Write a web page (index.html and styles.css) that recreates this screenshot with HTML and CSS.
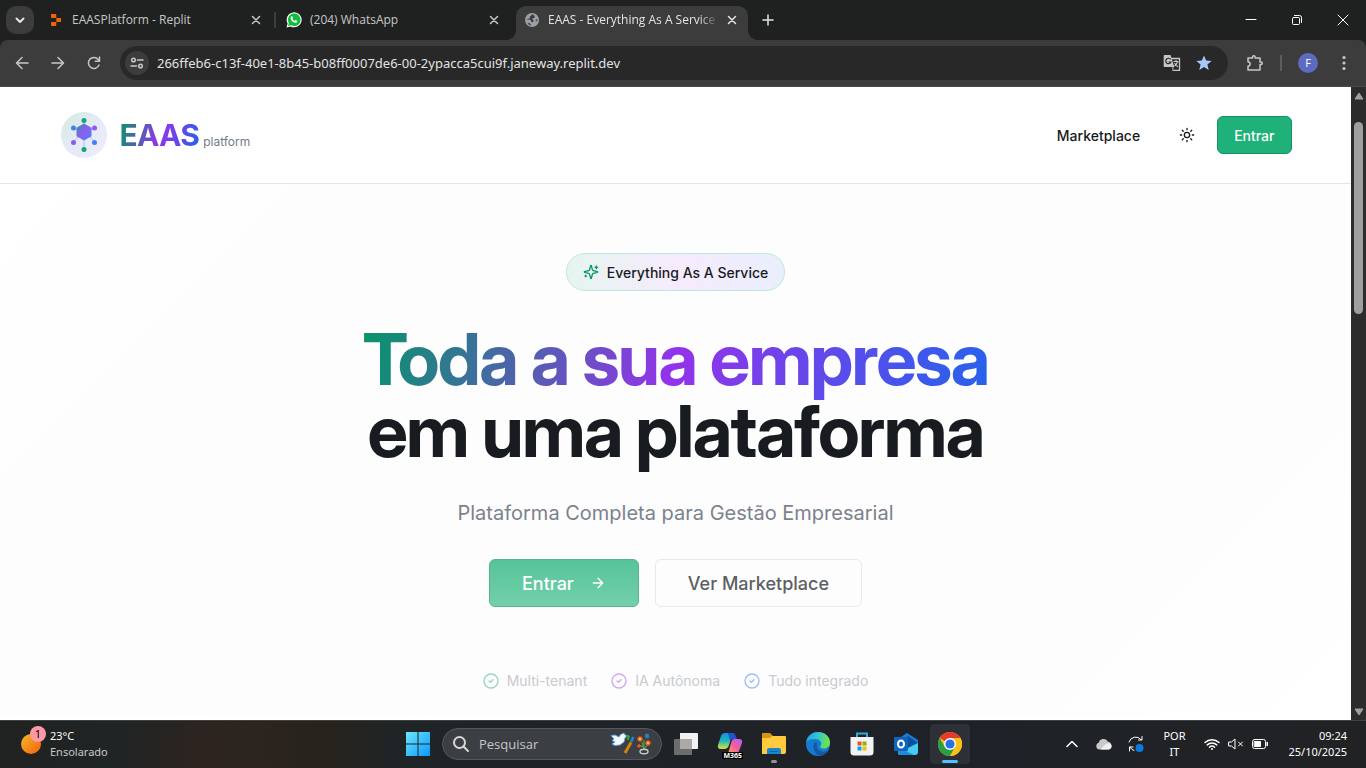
FILE: index.html
```html
<!DOCTYPE html>
<html lang="pt-BR">
<head>
<meta charset="utf-8">
<title>EAAS - Everything As A Service</title>
<meta name="viewport" content="width=device-width, initial-scale=1">
<link rel="stylesheet" href="styles.css">
</head>
<body>
<div class="tabstrip">
  <button class="tab-search" aria-label="Pesquisar guias"><svg width="12" height="12" viewBox="0 0 12 12" class="line w2"><path d="M2.5 4.5 6 8l3.5-3.5"/></svg></button>
  <div class="tabs">
    <div class="tab">
      <svg width="16" height="16" viewBox="0 0 16 16" fill="#f26207"><path d="M3 2h4.500q.8 0 .8.8V6H3.800Q3 6 3 5.200zM8.300 6h4q.8 0 .8.8v2.400q0 .8-.8.8h-4zM3 10.800q0-.8.8-.8h4.500v3.200q0 .8-.8.8H3.800Q3 14 3 13.200z"/></svg>
      <span class="tab-title">EAASPlatform - Replit</span>
      <button class="tab-close" aria-label="Fechar guia"><svg width="10" height="10" viewBox="0 0 10 10" class="line w15"><path d="m1.500 1.500 7 7m0-7-7 7"/></svg></button>
    </div>
    <div class="tab divided">
      <svg width="16" height="16" viewBox="0 0 16 16"><path fill="#fff" d="M.5 15.500 1.600 11.500A7.500 7.500 0 1 1 4.500 14.400z"/><path fill="#12bd3d" d="m2 14 .8-3A6.300 6.300 0 1 1 5 13.200z"/><path fill="#fff" d="M5.200 4.500c.4-.5 1-.5 1.200 0l.5 1.200c.1.300-.5.800-.5 1 .5 1 1.200 1.700 2.300 2.200.3 0 .7-.8 1-.8l1.400.7c.4.300 0 1.300-.5 1.700-1 .7-2.600.200-4-.9C5 8.200 4 6 5.200 4.500z"/></svg>
      <span class="tab-title">(204) WhatsApp</span>
      <button class="tab-close" aria-label="Fechar guia"><svg width="10" height="10" viewBox="0 0 10 10" class="line w15"><path d="m1.500 1.500 7 7m0-7-7 7"/></svg></button>
    </div>
    <div class="tab active">
      <svg width="16" height="16" viewBox="0 0 16 16"><circle cx="8" cy="8" r="7" fill="#9aa0a6"/><path fill="#3c3c3c" d="M9 2.500c-2 0-1.700 1.500-3 1.800-.5.700.300 1.200-.2 1.900-.7.800-2.600.3-3.300 1.300 1.600.500 3.200-.1 4.200.7.800.7.200 1.700 1.300 2 .8.300 1.500-.5 1.500-1.400 0-1-.8-1.400-1.500-2 .8-.8 2.300-.3 2.700-1.500.2-.7-.3-1-.3-1.500zM3.500 11c1 .2 2 0 2.800.7.500.6.400 1.300.8 2-1.500-.3-2.800-1.200-3.600-2.700zM12.800 7c-.9.500-1.300 1.400-1.100 2.600.700-.200 1.200-.8 1.600-.8q.1-1-.5-1.800z"/></svg>
      <span class="tab-title fade">EAAS - Everything As A Service |</span>
      <button class="tab-close" aria-label="Fechar guia"><svg width="10" height="10" viewBox="0 0 10 10" class="line w15"><path d="m1.500 1.500 7 7m0-7-7 7"/></svg></button>
    </div>
    <button class="new-tab" aria-label="Nova guia"><svg width="12" height="12" viewBox="0 0 12 12" class="line w15"><path d="M6 1v10M1 6h10"/></svg></button>
  </div>
  <div class="window-controls">
    <button aria-label="Minimizar"><svg width="12" height="12" viewBox="0 0 12 12" class="line w1"><path d="M1 5.500h10"/></svg></button>
    <button aria-label="Restaurar"><svg width="12" height="12" viewBox="0 0 12 12" class="line w1"><rect x="1.500" y="3.500" width="7" height="7" rx="1"/><path d="M3.500 1.500h5a2 2 0 0 1 2 2v5"/></svg></button>
    <button aria-label="Fechar"><svg width="12" height="12" viewBox="0 0 12 12" class="line w1"><path d="m1 1 10 10m0-10L1 11"/></svg></button>
  </div>
</div>

<div class="toolbar">
  <button class="tool" aria-label="Voltar"><svg width="16" height="16" viewBox="0 0 16 16" class="line w15"><path d="M14 8H2.500M8 2.500 2.500 8 8 13.500"/></svg></button>
  <button class="tool" aria-label="Avançar"><svg width="16" height="16" viewBox="0 0 16 16" class="line w15"><path d="M2 8h11.500M8 2.500 13.500 8 8 13.500"/></svg></button>
  <button class="tool" aria-label="Recarregar"><svg width="16" height="16" viewBox="0 0 16 16" class="line w15"><path d="M13 10a5.500 5.500 0 1 1-.8-5.500L13.500 6M13.500 2v4.200H9.300"/></svg></button>
  <div class="omnibox">
    <button class="site-info" aria-label="Informações do site"><svg width="14" height="14" viewBox="0 0 14 14" class="line w15"><circle cx="3.500" cy="4" r="1.800"/><path d="M7.500 4H13M1 10h5.500"/><circle cx="10.500" cy="10" r="1.800"/></svg></button>
    <input class="url" type="text" aria-label="Endereço" value="266ffeb6-c13f-40e1-8b45-b08ff0007de6-00-2ypacca5cui9f.janeway.replit.dev">
    <button class="omni-action" aria-label="Traduzir"><svg width="18" height="18" viewBox="0 0 18 18"><path d="M7 4.500h9.500v11.800H9.500" fill="none" stroke="#c7c7c7" stroke-width="1.300"/><path d="M1.500 1h6l3.800 12h-9.800q-.8 0-.8-.8V1.800q0-.8.8-.8z" fill="#c7c7c7"/><path d="M7.800 5.500A2.700 2.700 0 1 0 8 8H5.600" fill="none" stroke="#282828" stroke-width="1.200"/><path d="M10.500 7.500h5M13 6v1.500m1.500 0c-.5 2-1.500 3.500-3 4.500m0-3c.8 1.800 2 3 3.500 3.700" fill="none" stroke="#c7c7c7" stroke-width="1.100"/><path d="m9 13.500 2 0-1.500 2.500z" fill="#c7c7c7"/></svg></button>
    <button class="omni-action" aria-label="Favorito"><svg width="16" height="16" viewBox="0 0 16 16"><path fill="#a8c7fa" d="m8 .5 2.100 5.100 5.500.4-4.200 3.600 1.300 5.400L8 12.100 3.300 15l1.300-5.400L.4 6l5.500-.4z"/></svg></button>
  </div>
  <button class="tool ext" aria-label="Extensões"><svg width="18" height="18" viewBox="0 0 18 18" class="line w15"><path d="M2 4h4.500V3a1.300 1.300 0 0 1 2.600 0v1H14v4h1a1.300 1.300 0 0 1 0 2.600h-1V16H2v-3.700c2.800-.4 2.800-4.200 0-4.600z"/></svg></button>
  <span class="tool-sep"></span>
  <button class="profile" aria-label="Perfil">F</button>
  <button class="tool more" aria-label="Menu"><svg width="16" height="16" viewBox="0 0 16 16" fill="#c7c7c7"><circle cx="8" cy="2.500" r="1.600"/><circle cx="8" cy="8" r="1.600"/><circle cx="8" cy="13.500" r="1.600"/></svg></button>
</div>

<div class="viewport">
  <div class="page">
    <header class="site-header">
      <div class="container">
        <a class="brand" href="#">
          <svg width="48" height="48" viewBox="0 0 48 48">
            <defs>
              <linearGradient id="disc" x1="0" y1="0" x2="1" y2="1"><stop offset="0" stop-color="#d3ece3"/><stop offset=".5" stop-color="#e5eaf5"/><stop offset="1" stop-color="#efecfe"/></linearGradient>
              <linearGradient id="hex" x1="0" y1="0" x2="1" y2="1"><stop offset="0" stop-color="#358f9c"/><stop offset=".5" stop-color="#8a5ff2"/><stop offset="1" stop-color="#4a82f6"/></linearGradient>
            </defs>
            <circle cx="24" cy="24" r="23" fill="url(#disc)"/>
            <path d="M24 12v26M13.500 17 24 21l10.500-4M20 23l-6.500 8.500M28 23l6.500 8.500" fill="none" stroke="#b4bfeb" stroke-width="1"/>
            <path d="m24 12.500 7.500 4.200v8.600l-7.500 4.200-7.500-4.200v-8.600z" fill="url(#hex)"/>
            <g fill="#0fa67c"><circle cx="24" cy="9.500" r="2.500"/><circle cx="24" cy="38.500" r="2.500"/></g>
            <g fill="#3b82f6"><circle cx="13.500" cy="17" r="2.500"/><circle cx="34.500" cy="31.500" r="2.500"/></g>
            <g fill="#8b5cf6"><circle cx="34.500" cy="17" r="2.500"/><circle cx="13.500" cy="31.500" r="2.500"/></g>
          </svg>
          <span class="brand-text"><span class="brand-name">EAAS</span><span class="brand-sub">platform</span></span>
        </a>
        <nav class="site-nav">
          <a class="nav-link" href="#">Marketplace</a>
          <button class="theme" aria-label="Alternar tema"><svg width="16" height="16" viewBox="0 0 24 24" class="line w2"><circle cx="12" cy="12" r="4"/><path d="M12 2v2M12 20v2M4.930 4.930l1.410 1.410M17.660 17.660l1.410 1.410M2 12h2M20 12h2M6.340 17.660l-1.410 1.410M19.070 4.930l-1.410 1.410"/></svg></button>
          <button class="btn-primary">Entrar</button>
        </nav>
      </div>
    </header>
    <main class="hero">
      <div class="badge"><svg width="16" height="16" viewBox="0 0 24 24" class="line w2"><path d="M9.937 15.500A2 2 0 0 0 8.500 14.063l-6.135-1.582a.5.5 0 0 1 0-.962L8.500 9.936A2 2 0 0 0 9.937 8.500l1.582-6.135a.5.5 0 0 1 .963 0L14.063 8.500A2 2 0 0 0 15.500 9.937l6.135 1.581a.5.5 0 0 1 0 .964L15.500 14.063a2 2 0 0 0-1.437 1.437l-1.582 6.135a.5.5 0 0 1-.963 0zM20 3v4M22 5h-4M4 17v2M5 18H3"/></svg><span>Everything As A Service</span></div>
      <h1 class="title"><span class="title-gradient">Toda a sua empresa</span><br>em uma plataforma</h1>
      <p class="subtitle">Plataforma Completa para Gestão Empresarial</p>
      <div class="actions">
        <button class="cta cta-primary">Entrar<svg width="16" height="16" viewBox="0 0 24 24" class="line w2"><path d="M5 12h14M12 5l7 7-7 7"/></svg></button>
        <button class="cta cta-outline">Ver Marketplace</button>
      </div>
      <ul class="features">
        <li class="green"><svg width="16" height="16" viewBox="0 0 24 24" class="line w2"><circle cx="12" cy="12" r="10.500"/><path d="m9 12 2 2 4-4"/></svg>Multi-tenant</li>
        <li class="purple"><svg width="16" height="16" viewBox="0 0 24 24" class="line w2"><circle cx="12" cy="12" r="10.500"/><path d="m9 12 2 2 4-4"/></svg>IA Autônoma</li>
        <li class="blue"><svg width="16" height="16" viewBox="0 0 24 24" class="line w2"><circle cx="12" cy="12" r="10.500"/><path d="m9 12 2 2 4-4"/></svg>Tudo integrado</li>
      </ul>
    </main>
  </div>
  <div class="scrollbar">
    <svg width="10" height="8" viewBox="0 0 10 8"><path fill="#9f9f9f" stroke="#9f9f9f" stroke-linejoin="round" d="m5 1 4 6H1z"/></svg>
    <div class="track"><div class="thumb"></div></div>
    <svg width="10" height="8" viewBox="0 0 10 8"><path fill="#9f9f9f" stroke="#9f9f9f" stroke-linejoin="round" d="M5 7 1 1h8z"/></svg>
  </div>
</div>

<footer class="taskbar">
  <button class="weather">
    <span class="weather-icon"><svg width="20" height="20" viewBox="0 0 20 20"><defs><linearGradient id="sun" x1="0" y1="0" x2="1" y2="1"><stop offset="0" stop-color="#f5b92c"/><stop offset="1" stop-color="#f2600c"/></linearGradient></defs><circle cx="10" cy="10" r="10" fill="url(#sun)"/></svg><span class="count">1</span></span>
    <span class="weather-text"><span>23°C</span><span class="dim">Ensolarado</span></span>
  </button>
  <div class="apps">
    <button class="app" aria-label="Iniciar"><svg width="24" height="24" viewBox="0 0 24 24"><defs><linearGradient id="win" gradientUnits="userSpaceOnUse" x1="0" y1="0" x2="24" y2="24"><stop offset="0" stop-color="#6fe6ff"/><stop offset="1" stop-color="#0a98fa"/></linearGradient></defs><path fill="url(#win)" d="M0 0h11.500v11.500H0zM12.500 0H24v11.500H12.500zM0 12.500h11.500V24H0zM12.500 12.500H24V24H12.500z"/></svg></button>
    <label class="search">
      <svg width="16" height="16" viewBox="0 0 16 16" class="line w2"><circle cx="6.500" cy="6.500" r="5.500"/><path d="m10.500 10.500 4.500 4.500"/></svg>
      <input type="text" placeholder="Pesquisar" aria-label="Pesquisar">
      <svg width="42" height="24" viewBox="0 0 42 24"><path d="M1 3.500 5 3l4 2 1.500-2.500L14 1l1 2 2 .5-2 2.500-1 4-4 3-5 .500-3-1.500L5 10 2 8.500 4 7z" fill="#f3faff" stroke="#4da3e6" stroke-width=".9"/><path d="m16 4.500 4 .5M18 3v5" stroke="#3c9a42" stroke-width="2"/><path d="m15 21 6-10.500" stroke="#c8860d" stroke-width="3"/><path d="m21 10 2.500-5" stroke="#2385d0" stroke-width="2.500"/><path d="m34 17-2-7M34 17l4-5M34 17V8M33 15l-4-2" stroke="#4f9b45" stroke-width="1.200"/><g stroke="#e0602c" stroke-width="1.300"><path d="M30 4v6M27 7h6M28 5l4 4M32 5l-4 4M38 8v6M35 11h6M36 9l4 4M40 9l-4 4M29 12v4M27 14h4"/></g><path d="M34.500 4h5M37 1.500v5M35.200 2.200l3.600 3.600M38.800 2.200l-3.600 3.600" stroke="#2f80bd" stroke-width="1.200"/><circle cx="30" cy="7" r="1.200" fill="#ffc83d"/><circle cx="38" cy="11" r="1.200" fill="#ffc83d"/><ellipse cx="34" cy="19.500" rx="4" ry="2.300" fill="none" stroke="#ccc" stroke-width="1.400"/></svg>
    </label>
    <button class="app" aria-label="Visão de tarefas"><svg width="24" height="24" viewBox="0 0 24 24"><path fill="#f2f2f2" d="M6 1h17a1 1 0 0 1 1 1v14a1 1 0 0 1-1 1H6z"/><path fill="#6d6d6d" d="M1 7h17v16H1a1 1 0 0 1-1-1V8a1 1 0 0 1 1-1z"/><path fill="#aaa" d="M6 7h12v10H6z"/></svg></button>
    <button class="app" aria-label="Copilot"><svg width="26" height="24" viewBox="0 0 26 24"><defs><linearGradient id="co1" x1="0" y1="0" x2="0" y2="1"><stop offset="0" stop-color="#168fe8"/><stop offset=".5" stop-color="#21b9b7"/><stop offset="1" stop-color="#e5df3a"/></linearGradient><linearGradient id="co2" x1="1" y1="0" x2="0" y2="1"><stop offset="0" stop-color="#b65cff"/><stop offset=".5" stop-color="#f05d9c"/><stop offset="1" stop-color="#ffa551"/></linearGradient></defs><path fill="url(#co1)" d="M8 1h8l-4 12q-1 4-5 4H4q-4 0-3-4l3-9q1-3 4-3z"/><path fill="#1b56cf" d="M11 1h5q2 0 3 4l1 2h-5l-2 2z"/><path fill="url(#co2)" d="M17 7h5q4 0 3 4l-3 8q-1 3-4 3h-7l3-11q1-4 3-4z"/></svg><span class="m365">M365</span></button>
    <button class="app running" aria-label="Explorador de Arquivos"><svg width="24" height="24" viewBox="0 0 24 24"><path fill="#d99512" d="M0 2q0-1 1-1h7l3 3v4H0z"/><path fill="#ffca3e" d="M0 6h8l2-2h13q1 0 1 1v15q0 2-2 2H0z"/><path fill="#1788cf" d="M5 18q0-2 2-2h10q2 0 2 2v4H5z"/><path fill="#0d5e9d" d="M8 19h8v1H8z"/></svg></button>
    <button class="app" aria-label="Edge"><svg width="24" height="24" viewBox="0 0 24 24"><defs><linearGradient id="ed1" x1="0" y1="0" x2="1" y2=".2"><stop offset="0" stop-color="#259be0"/><stop offset=".5" stop-color="#31c5d4"/><stop offset="1" stop-color="#6ee150"/></linearGradient></defs><circle cx="12" cy="12" r="12" fill="#157bd0"/><path fill="url(#ed1)" d="M.2 10C1.500 3 7 0 12 0c8 0 12 5.500 12 10.500 0 4-3 6-6.500 6-3 0-4-1.500-3-2.500 1.500-1.800 1-6-4-7C6 6.500 2 7.500.2 10z"/><path fill="#1556a5" d="M8 11c-2 6 1.500 13 7.500 12.500 3-.8 5.500-2.800 7-5-7 3-13 0-11.500-7.500-1-1-2.500-1-3 0z"/></svg></button>
    <button class="app" aria-label="Microsoft Store"><svg width="24" height="24" viewBox="0 0 24 24"><path d="M7 6V1.500h10V6" fill="none" stroke="#33a9e0" stroke-width="2"/><path d="M.5 5h23v15q0 3.500-3.500 3.500H4Q.5 23.500.5 20z" fill="#f3f3f3"/><path fill="#f05022" d="M7.500 9.500h4v4h-4z"/><path fill="#7fba00" d="M12.500 9.500h4v4h-4z"/><path fill="#00a4ef" d="M7.500 14.500h4v4h-4z"/><path fill="#ffb900" d="M12.500 14.500h4v4h-4z"/></svg></button>
    <button class="app" aria-label="Outlook"><svg width="24" height="24" viewBox="0 0 24 24"><path fill="#1680d8" d="m4 7 9-6 11 7v4L14 18 4 12z"/><path fill="#0c4f9d" d="m8 8 6-4 10 7-10 5z"/><path fill="#46cbf2" d="M24 11v9q0 3-3 3H7q-3 0-3-2z"/><path fill="#1c8ee0" d="m4 15 16 8H7q-3 0-3-3z"/><rect y="5" width="14" height="14" rx="1" fill="#0f64be"/><ellipse cx="7" cy="12" rx="3" ry="3.500" fill="none" stroke="#fff" stroke-width="2"/></svg></button>
    <button class="app current" aria-label="Chrome"><svg width="24" height="24" viewBox="0 0 24 24"><circle cx="12" cy="12" r="12" fill="#fbc116"/><path fill="#e33b2e" d="M12 12 1.600 6A12 12 0 0 1 22.400 6z"/><path fill="#269f47" d="M1.600 6A12 12 0 0 0 12 24l5.200-9L12 12l-5.200 3z"/><path fill="#fbc116" d="M12 6h10.400A12 12 0 0 1 12 24l5.200-9z"/><circle cx="12" cy="12" r="6" fill="#fff"/><circle cx="12" cy="12" r="4.600" fill="#2870e8"/></svg></button>
  </div>
  <div class="tray">
    <button class="tray-icon" aria-label="Ícones ocultos"><svg width="12" height="12" viewBox="0 0 12 12" class="line w15"><path d="m1 8.500 5-5 5 5"/></svg></button>
    <button class="tray-icon" aria-label="OneDrive"><svg width="16" height="12" viewBox="0 0 16 12"><path fill="#c9c9c9" d="M3.500 11.500a3.500 3.500 0 0 1-.8-6.800A5 5 0 0 1 11.800 3.500a4.200 4.200 0 0 1 .7 8z"/><path fill="#f0f0f0" d="M5 11.500q2-5 8-6.500 3 1 2.700 3.500-.5 3-3.200 3z"/></svg></button>
    <button class="tray-icon" aria-label="Atualização"><svg width="18" height="18" viewBox="0 0 18 18" class="line w1"><path d="M2 7a7 7 0 0 1 12-2.500M15 1.500V5h-3.500M7 15.500a6 6 0 0 1-4-3.500M2.500 16v-4H6"/><circle cx="12.500" cy="13" r="4" fill="#0a7be0" stroke="none"/></svg></button>
    <button class="lang"><span>POR</span><span>IT</span></button>
    <button class="status" aria-label="Rede, som e bateria">
      <svg width="16" height="14" viewBox="0 0 16 14" class="line w15"><path d="M1 5.500a10 10 0 0 1 14 0M3.300 7.900a6.700 6.700 0 0 1 9.400 0M5.500 10.200a3.600 3.600 0 0 1 5 0"/><circle cx="8" cy="12" r="1" fill="currentColor" stroke="none"/></svg>
      <svg width="16" height="14" viewBox="0 0 16 14" class="line w1"><path d="M1 5h2.500L7 2v10L3.500 9H1zM10.500 5l4 4m0-4-4 4"/></svg>
      <svg width="16" height="14" viewBox="0 0 16 14" class="line w1"><rect x=".5" y="2.500" width="13" height="9" rx="2"/><path d="M2.500 4.500h6v5h-6z" fill="currentColor"/><path d="M15.200 5.500v3" stroke-width="1.500"/></svg>
    </button>
    <button class="clock"><span>09:24</span><span>25/10/2025</span></button>
  </div>
</footer>
</body>
</html>
```
FILE: styles.css
```css
* { box-sizing: border-box; }
body {
  margin: 0;
  height: 100vh;
  display: flex;
  flex-direction: column;
  overflow: hidden;
  font-family: "Open Sans", "Noto Sans", sans-serif;
  font-size: 12px;
  color: #e3e3e3;
  background: #1f2020;
}
button, input { font: inherit; color: inherit; background: none; border: 0; padding: 0; margin: 0; }
a { color: inherit; text-decoration: none; }
svg { flex: none; display: block; }
.line { fill: none; stroke: currentColor; stroke-linecap: round; stroke-linejoin: round; }
.w1 { stroke-width: 1; }
.w15 { stroke-width: 1.5; }
.w2 { stroke-width: 2; }

/* Tab strip */
.tabstrip { display: flex; height: 40px; padding-left: 6px; background: #1f2120; }
.tab-search { display: grid; place-items: center; width: 28px; height: 28px; margin: 6px 6px 0 0; border-radius: 10px; background: #3c3c3c; }
.tabs { display: flex; flex: 1; gap: 6px; min-width: 0; }
.tab { position: relative; display: flex; align-items: center; gap: 8px; flex: 0 1 232px; min-width: 0; margin-top: 6px; padding: 0 11px 6px 8px; color: #c7c7c7; }
.tab-title { flex: 1; min-width: 0; overflow: hidden; white-space: nowrap; font-size: 12px; line-height: 16px; }
.tab-close { display: grid; place-items: center; }
.divided::before { content: ""; position: absolute; left: -4px; top: 6px; width: 2px; height: 16px; background: #3c3c3c; }
.active { background: #3c3c3c; border-radius: 10px 10px 0 0; color: #e3e3e3; }
.active::before, .active::after { content: ""; position: absolute; bottom: 0; width: 10px; height: 10px; }
.active::before { left: -10px; background: radial-gradient(circle at 0 0, transparent 10px, #3c3c3c 10px); }
.active::after { right: -10px; background: radial-gradient(circle at 100% 0, transparent 10px, #3c3c3c 10px); }
.fade { -webkit-mask-image: linear-gradient(90deg, #000 88%, transparent); mask-image: linear-gradient(90deg, #000 88%, transparent); }
.new-tab { display: grid; place-items: center; width: 28px; height: 40px; }
.window-controls { display: flex; color: #fff; }
.window-controls button { display: grid; place-items: center; width: 46px; }

/* Toolbar */
.toolbar { display: flex; align-items: center; height: 47px; padding: 0 8px 0 4px; background: #3c3c3c; border-bottom: 1px solid #4a4a4a; border-radius: 8px 8px 0 0; color: #c7c7c7; }
.tool { display: grid; place-items: center; width: 36px; height: 34px; }
.omnibox { display: flex; align-items: center; flex: 1; height: 34px; margin-left: 8px; padding: 0 8px 0 5px; border-radius: 17px; background: #282828; }
.site-info { display: grid; place-items: center; width: 24px; height: 24px; margin-right: 8px; border-radius: 50%; background: #3c3c3c; }
.url { flex: 1; min-width: 0; font-family: "Noto Sans", sans-serif; font-size: 13px; color: #e3e3e3; outline: 0; }
.omni-action { display: grid; place-items: center; width: 32px; height: 32px; }
.ext { margin-left: 9px; }
.tool-sep { width: 2px; height: 16px; margin: 0 16px 0 7px; background: #5c5c5c; }
.profile { width: 20px; height: 20px; border-radius: 50%; background: #5c6bc0; color: #fff; font-size: 11px; line-height: 20px; }
.more { width: 28px; margin-left: 12px; }

/* Page */
.viewport { display: flex; flex: 1; min-height: 0; font-family: Inter, sans-serif; color: #181b20; }
.page { flex: 1; min-width: 0; overflow: hidden; background: #fff; }
.site-header { border-bottom: 1px solid #e5e5e5; }
.container { display: flex; align-items: center; justify-content: space-between; max-width: 1280px; margin: 0 auto; padding: 24px; }
.brand { display: flex; align-items: center; gap: 12px; }
.brand-text { display: flex; align-items: baseline; gap: 4px; }
.brand-name { font-size: 30px; font-weight: 700; line-height: 36px; letter-spacing: -0.025em; }
.brand-name, .title-gradient { background: linear-gradient(105deg, #059669, #9333ea 50%, #2563eb); -webkit-background-clip: text; background-clip: text; color: transparent; }
.brand-sub { font-size: 12px; line-height: 16px; color: #747b88; }
.site-nav { display: flex; align-items: center; font-size: 14px; font-weight: 500; }
.theme { display: grid; place-items: center; width: 38px; height: 38px; margin: 0 11px 0 28px; }
.btn-primary { height: 38px; padding: 0 16px; border: 1px solid #189161; border-radius: 6px; background: #1eb179; color: #fff; }
.hero { display: flex; flex-direction: column; align-items: center; padding: 69px 24px 24px; background: linear-gradient(135deg, #fff, #fdfdfd 20%, #fdfdfd 80%, #fff); }
.badge { display: flex; align-items: center; gap: 8px; height: 38px; padding: 0 16px; border: 1px solid #bce8df; border-radius: 19px; background: linear-gradient(to right, #e6f5f0, #f6ebfd 50%, #e9effd); font-size: 14px; font-weight: 500; }
.badge svg { color: #059669; }
.title { margin: 32px 0; font-family: "Inter Display", Inter, sans-serif; font-size: 72px; font-weight: 700; line-height: 72px; letter-spacing: -0.025em; text-align: center; }
.subtitle { margin: 0; font-size: 20px; line-height: 28px; color: #7c828d; }
.actions { display: flex; gap: 16px; margin-top: 32px; }
.cta { display: flex; align-items: center; gap: 16px; height: 48px; padding: 0 32px; border: 1px solid #e9e9ea; border-radius: 6px; font-size: 18px; font-weight: 500; }
.cta-primary { border-color: #58b48f; background: linear-gradient(#56c499, #73cfaa); color: #fff; }
.cta-outline { color: #5d5f63; }
.features { display: flex; gap: 24px; margin: 64px 0 0; padding: 0; list-style: none; font-size: 14px; line-height: 20px; color: #c7cacf; }
.features li { display: flex; align-items: center; gap: 8px; }
.green svg { color: #98d3bd; }
.purple svg { color: #d1a6f6; }
.blue svg { color: #a0bbf6; }
.scrollbar { display: flex; flex-direction: column; align-items: center; gap: 22px; flex: none; width: 15px; padding: 5px 0 4px; background: #2c2c2c; }
.track { flex: 1; width: 9px; }
.thumb { height: 34%; border-radius: 5px; background: #9f9f9f; }

/* Taskbar */
.taskbar { display: grid; grid-template-columns: 1fr auto 1fr; align-items: center; height: 48px; padding-left: 2px; box-shadow: inset 0 1px #3f4242; background: linear-gradient(90deg, #202220, #1f2425 8%, #2d2420 15%, #28231d 24%, #1f2427 29%, #1e2228 70%, #212224); color: #fff; font-family: "Noto Sans", sans-serif; font-size: 11px; line-height: 16px; }
.weather { display: flex; align-items: center; justify-self: start; gap: 9px; padding-left: 19px; text-align: left; }
.weather-icon { position: relative; }
.count { position: absolute; left: 9px; top: -8px; width: 16px; height: 16px; border-radius: 50%; background: #ff99a4; color: #000; text-align: center; }
.weather-text, .lang, .clock { display: flex; flex-direction: column; }
.dim { color: #c9c9c7; }
.apps { display: flex; align-items: center; gap: 4px; }
.app { position: relative; display: grid; place-items: center; width: 40px; height: 40px; border-radius: 4px; }
.search { display: flex; align-items: center; gap: 10px; width: 220px; height: 32px; padding: 0 9px 0 10px; border: 1px solid #54585c; border-radius: 16px; background: #3b3f43; color: #d6d6d6; }
.search input { flex: 1; min-width: 0; font-family: "Open Sans", sans-serif; font-size: 13px; outline: 0; }
.search input::placeholder { color: #c6c7c8; opacity: 1; }
.m365 { position: absolute; right: 7px; bottom: 5px; background: #000; font-size: 7px; font-weight: 700; line-height: 7px; padding: 0 1px; }
.current { background: #2d3036; }
.running::after, .current::after { content: ""; position: absolute; bottom: 1px; left: 17px; width: 6px; height: 3px; border-radius: 2px; background: #929497; }
.current::after { left: 12px; width: 16px; background: #4cc2ff; }
.tray { display: flex; align-items: center; justify-self: end; padding-right: 19px; }
.tray-icon { display: grid; place-items: center; width: 32px; height: 40px; }
.lang { width: 32px; margin: 0 14px 0 6px; align-items: center; }
.status { display: flex; gap: 8px; }
.clock { align-items: flex-end; margin-left: 20px; }
```
